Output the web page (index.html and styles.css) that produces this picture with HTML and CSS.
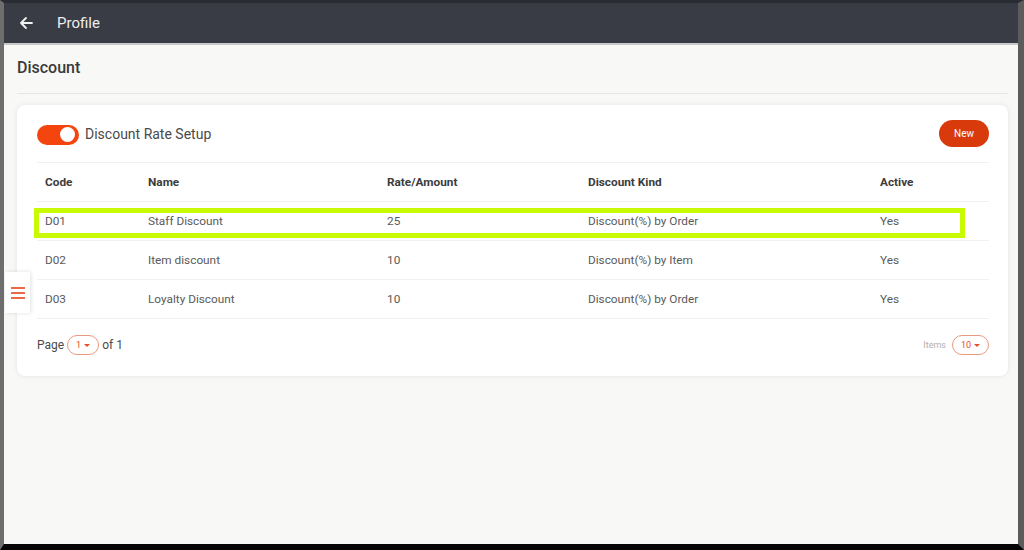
FILE: index.html
```html
<!DOCTYPE html>
<html lang="en">

<head>
    <meta charset="UTF-8" />
    <title>Discount</title>
    <link rel="stylesheet" href="styles.css">
</head>

<body>
    <div class="screen">
        <!-- top bar -->
        <div class="topbar">
            <svg class="back" width="14" height="14" viewBox="0 0 14 14">
                <path d="M13 7H2M7 2L2 7l5 5" fill="none" stroke="#f2f2f2" stroke-width="1.8" stroke-linecap="round" stroke-linejoin="round" />
            </svg>
            <span class="topbar-title">Profile</span>
        </div>

        <div class="main">
            <h2 class="page-title">Discount</h2>

            <div class="card">
                <div class="card-head">
                    <div class="toggle"><span class="knob"></span></div>
                    <span class="card-title">Discount Rate Setup</span>
                    <button class="btn-new">New</button>
                </div>

                <table class="grid">
                    <thead>
                        <tr>
                            <th class="c-code">Code</th>
                            <th class="c-name">Name</th>
                            <th class="c-rate">Rate/Amount</th>
                            <th class="c-kind">Discount Kind</th>
                            <th>Active</th>
                        </tr>
                    </thead>
                    <tbody>
                        <tr>
                            <td>D01</td>
                            <td>Staff Discount</td>
                            <td>25</td>
                            <td>Discount(%) by Order</td>
                            <td>Yes</td>
                        </tr>
                        <tr>
                            <td>D02</td>
                            <td>Item discount</td>
                            <td>10</td>
                            <td>Discount(%) by Item</td>
                            <td>Yes</td>
                        </tr>
                        <tr>
                            <td>D03</td>
                            <td>Loyalty Discount</td>
                            <td>10</td>
                            <td>Discount(%) by Order</td>
                            <td>Yes</td>
                        </tr>
                    </tbody>
                </table>

                <div class="card-foot">
                    <div class="pager">
                        Page <span class="pill">1 <i class="caret"></i></span> of 1
                    </div>
                    <div class="items">
                        <span class="items-label">Items</span>
                        <span class="pill pill-wide">10 <i class="caret"></i></span>
                    </div>
                </div>

                <!-- highlight drawn over the first row -->
                <div class="mark"></div>
            </div>
        </div>

        <!-- side menu tab -->
        <div class="side-tab">
            <span></span><span></span><span></span>
        </div>
    </div>
</body>

</html>
```

FILE: styles.css
```css
body {
    margin: 0;
    padding: 0;
    background-color: #000;
    font-family: Roboto, "Liberation Sans", Arial, sans-serif;
}

.screen {
    position: relative;
    width: 1024px;
    height: 550px;
    box-sizing: border-box;
    border-top: 3px solid #2a2c34;
    border-left: 4px solid #6e6e6e;
    border-right: 6px solid #5c5c5c;
    border-bottom: 6px solid #050505;
    background-color: #f8f8f6;
    overflow: hidden;
}

.topbar {
    height: 40px;
    display: flex;
    align-items: center;
    background-color: #393b45;
    border-bottom: 2px solid #c9c9c9;
}

.back {
    margin-left: 15px;
}

.topbar-title {
    margin-left: 24px;
    color: #ededed;
    font-size: 15px;
}

.main {
    padding: 0 10px 0 13px;
}

.page-title {
    margin: 0;
    padding: 13px 0 15px;
    font-size: 16px;
    line-height: 20px;
    font-weight: 500;
    color: #3a3a3a;
    border-bottom: 1px solid #e6e6e4;
}

.card {
    position: relative;
    margin-top: 11px;
    padding: 0 19px 0 20px;
    background-color: #fff;
    border-radius: 8px;
    box-shadow: 0 0 5px rgba(0, 0, 0, 0.09);
}

.card-head {
    height: 57px;
    display: flex;
    align-items: center;
    border-bottom: 1px solid #f0f0f0;
}

.toggle {
    width: 42px;
    height: 20px;
    margin-top: 2px;
    border-radius: 10px;
    background-color: #f4450f;
    display: flex;
    align-items: center;
    justify-content: flex-end;
}

.knob {
    width: 15px;
    height: 15px;
    margin-right: 4px;
    border-radius: 50%;
    background-color: #fff;
}

.card-title {
    margin-left: 6px;
    font-size: 14px;
    color: #4a4a4a;
}

.btn-new {
    margin-left: auto;
    width: 50px;
    height: 27px;
    border: none;
    border-radius: 14px;
    background-color: #d83a0b;
    color: #fff;
    font-family: inherit;
    font-size: 10px;
}

.grid {
    width: 100%;
    border-collapse: collapse;
    font-size: 11.8px;
}

.grid th,
.grid td {
    height: 38px;
    padding: 0 0 0 8px;
    text-align: left;
    border-bottom: 1px solid #f1f1f1;
}

.grid th {
    font-weight: 700;
    color: #3c3c3c;
}

.grid td {
    color: #5a5a5a;
}

.grid .c-code {
    width: 95px;
}

.grid .c-name {
    width: 231px;
}

.grid .c-rate {
    width: 193px;
}

.grid .c-kind {
    width: 284px;
}

.card-foot {
    height: 57px;
    box-sizing: border-box;
    padding-bottom: 5px;
    display: flex;
    align-items: center;
    justify-content: space-between;
}

.pager {
    font-size: 12px;
    color: #4a4a4a;
    display: flex;
    align-items: center;
}

.pill {
    display: inline-flex;
    align-items: center;
    justify-content: center;
    gap: 3px;
    width: 30px;
    height: 18px;
    margin: 0 3px;
    border: 1px solid #e89a7e;
    border-radius: 10px;
    color: #e2502a;
    font-size: 9px;
}

.pill-wide {
    width: 35px;
    margin: 0;
}

.caret {
    width: 0;
    height: 0;
    border-left: 3px solid transparent;
    border-right: 3px solid transparent;
    border-top: 3px solid #e2502a;
}

.items {
    display: flex;
    align-items: center;
}

.items-label {
    margin-right: 6px;
    font-size: 9px;
    color: #b0b0b0;
}

.mark {
    position: absolute;
    left: 17px;
    top: 103px;
    width: 921px;
    height: 20px;
    border: 5px solid #c8fa05;
}

.side-tab {
    position: absolute;
    left: 1px;
    top: 269px;
    width: 25px;
    height: 41px;
    background-color: #fff;
    box-shadow: 1px 0 4px rgba(0, 0, 0, 0.12);
    display: flex;
    flex-direction: column;
    justify-content: center;
    align-items: center;
    gap: 3px;
}

.side-tab span {
    width: 14px;
    height: 2px;
    background-color: #ec6a45;
}
```
